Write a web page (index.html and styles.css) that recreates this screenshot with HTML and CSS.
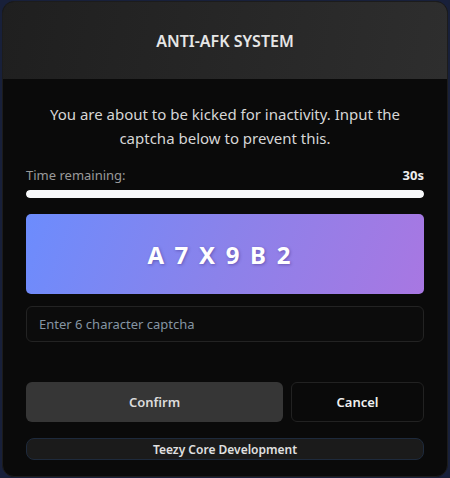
FILE: index.html
```html
<!DOCTYPE html>
<html>
<head>
<meta charset="utf-8">
<link rel="stylesheet" href="styles.css">
</head>
<body>
<div class="card">
  <div class="header"><h1 class="title">ANTI-AFK SYSTEM</h1></div>
  <div class="content">
    <p class="message">You are about to be kicked for inactivity. Input the captcha below to prevent this.</p>
    <div class="timer-row"><span class="timer-label">Time remaining:</span><span class="timer-value">30s</span></div>
    <div class="bar"><div class="bar-fill" style="width:100%"></div></div>
    <div class="captcha"><span class="captcha-text">A 7 X 9 B 2</span></div>
    <input class="captcha-input" type="text" placeholder="Enter 6 character captcha">
    <div class="actions">
      <button class="btn btn-confirm">Confirm</button>
      <button class="btn btn-cancel">Cancel</button>
    </div>
    <div class="footer">Teezy Core Development</div>
  </div>
</div>
</body>
</html>
```
FILE: styles.css
```css
* { box-sizing: border-box; }
html, body { margin: 0; padding: 0; }
body {
  width: 450px;
  height: 478px;
  background: #18203a;
  font-family: "Noto Sans", "Open Sans", sans-serif;
  padding: 1px 2px 1px 2px;
}
.card {
  height: 476px;
  background: #0a0a0a;
  border: 1px solid #1c1c1c;
  border-radius: 12px;
  overflow: hidden;
}
.header {
  height: 77px;
  background: linear-gradient(100deg, #1f1f1f 0%, #2e2e2e 100%);
  display: flex;
  align-items: center;
  justify-content: center;
}
.title {
  margin: 0;
  font-size: 16px;
  font-weight: 600;
  color: #e6e6e6;
  letter-spacing: 0;
}
.content {
  padding: 23px 23px 0 23px;
  display: flex;
  flex-direction: column;
}
.message {
  margin: 0;
  text-align: center;
  font-size: 15px;
  line-height: 24px;
  color: #d6d6d6;
  padding: 0 16px;
}
.timer-row {
  margin-top: 16px;
  display: flex;
  justify-content: space-between;
  font-size: 13px;
  line-height: 18px;
}
.timer-label { color: #9a9a9a; }
.timer-value { color: #eeeeee; font-weight: 700; }
.bar {
  margin-top: 6px;
  height: 8px;
  border-radius: 4px;
  background: #2a2a2a;
  overflow: hidden;
}
.bar-fill { height: 100%; background: #f8f9fb; border-radius: 4px; }
.captcha {
  margin-top: 16px;
  height: 80px;
  border-radius: 5px;
  background: linear-gradient(110deg, #6c8cfd 0%, #8b82ea 50%, #a877e2 100%);
  display: flex;
  align-items: center;
  justify-content: center;
}
.captcha-text {
  font-size: 24px;
  font-weight: 700;
  color: #ffffff;
  letter-spacing: 2.2px;
  margin-right: 10px;
  text-shadow: 1px 1px 3px rgba(60, 40, 120, 0.45);
}
.captcha-input {
  margin-top: 12px;
  height: 36px;
  width: 100%;
  background: #0c0c0c;
  border: 1px solid #232323;
  border-radius: 6px;
  padding: 0 12px;
  font-family: inherit;
  font-size: 13px;
  color: #ddd;
  outline: none;
}
.captcha-input::placeholder { color: #8595a3; }
.actions {
  margin-top: 40px;
  display: flex;
  gap: 8px;
}
.btn {
  height: 40px;
  border-radius: 6px;
  font-family: inherit;
  font-size: 13px;
  font-weight: 600;
  cursor: pointer;
}
.btn-confirm {
  flex: 0 0 257px;
  background: #363636;
  border: none;
  color: #dcdcdc;
}
.btn-cancel {
  flex: 1;
  background: #0a0a0a;
  border: 1px solid #222222;
  color: #f0f0f0;
}
.footer {
  margin-top: 16px;
  height: 22px;
  border-radius: 8px;
  background: #1b1b1b;
  border: 1px solid #1e2a3c;
  display: flex;
  align-items: center;
  justify-content: center;
  font-size: 12px;
  font-weight: 600;
  color: #e0e0e0;
}
```
